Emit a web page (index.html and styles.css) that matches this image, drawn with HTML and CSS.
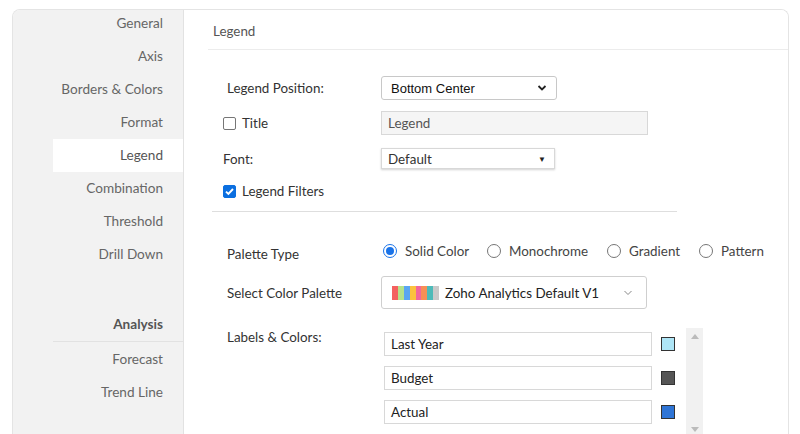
FILE: index.html
```html
<!DOCTYPE html>
<html>
<head>
<meta charset="utf-8">
<link rel="stylesheet" href="styles.css">
</head>
<body>
<div class="frame">
  <aside class="sidebar">
    <ul class="nav">
      <li class="nav-item">General</li>
      <li class="nav-item">Axis</li>
      <li class="nav-item">Borders &amp; Colors</li>
      <li class="nav-item">Format</li>
      <li class="nav-item active">Legend</li>
      <li class="nav-item">Combination</li>
      <li class="nav-item">Threshold</li>
      <li class="nav-item">Drill Down</li>
    </ul>
    <div class="nav-group">Analysis</div>
    <ul class="nav">
      <li class="nav-item">Forecast</li>
      <li class="nav-item">Trend Line</li>
    </ul>
  </aside>
  <main class="main">
    <div class="header"><span>Legend</span></div>
    <div class="form">
      <div class="row r1">
        <label class="label ind">Legend Position:</label>
        <div class="select native">
          <span>Bottom Center</span>
          <svg width="10" height="8" viewBox="0 0 10 8"><path d="M1.5 2 L5 5.5 L8.5 2" fill="none" stroke="#222" stroke-width="1.8"/></svg>
        </div>
      </div>
      <div class="row r2">
        <label class="label"><span class="cb"></span>Title</label>
        <div class="text-input">Legend</div>
      </div>
      <div class="row r3">
        <label class="label">Font:</label>
        <div class="select flat">
          <span>Default</span>
          <span class="tri">&#9660;</span>
        </div>
      </div>
      <div class="row r4">
        <label class="label"><span class="cb on"><svg width="11" height="11" viewBox="0 0 11 11"><path d="M2 5.6 L4.4 8 L9 3" fill="none" stroke="#fff" stroke-width="1.9"/></svg></span>Legend Filters</label>
      </div>
      <div class="sep"></div>
      <div class="row r5">
        <label class="label ind">Palette Type</label>
        <div class="radios">
          <span class="opt w1"><span class="radio on"></span><span class="rlabel">Solid Color</span></span>
          <span class="opt w2"><span class="radio"></span><span class="rlabel">Monochrome</span></span>
          <span class="opt w3"><span class="radio"></span><span class="rlabel">Gradient</span></span>
          <span class="opt"><span class="radio"></span><span class="rlabel">Pattern</span></span>
        </div>
      </div>
      <div class="row r6">
        <label class="label ind">Select Color Palette</label>
        <div class="palette">
          <span class="strip">
            <i style="background:#f4615f"></i><i style="background:#b6e28b"></i><i style="background:#5aa6f2"></i><i style="background:#fbc23e"></i><i style="background:#f2679c"></i><i style="background:#f78f56"></i><i style="background:#4dbab8"></i><i style="background:#c9c9c9"></i>
          </span>
          <span class="ptext">Zoho Analytics Default V1</span>
          <svg class="chev" width="10" height="6" viewBox="0 0 10 6"><path d="M1.5 1 L5 4.5 L8.5 1" fill="none" stroke="#888" stroke-width="1"/></svg>
        </div>
      </div>
      <div class="row r7">
        <label class="label ind top">Labels &amp; Colors:</label>
        <div class="lc">
          <div class="lc-list">
            <div class="lc-row"><div class="lc-input">Last Year</div><span class="sw" style="background:#aee5f6"></span></div>
            <div class="lc-row"><div class="lc-input">Budget</div><span class="sw" style="background:#555555"></span></div>
            <div class="lc-row"><div class="lc-input">Actual</div><span class="sw" style="background:#2f75d6"></span></div>
          </div>
          <div class="scroll">
            <svg width="8" height="5" viewBox="0 0 8 5"><path d="M0 5 L4 0 L8 5 Z" fill="#bbb"/></svg>
            <svg width="8" height="5" viewBox="0 0 8 5"><path d="M0 0 L4 5 L8 0 Z" fill="#bbb"/></svg>
          </div>
        </div>
      </div>
    </div>
  </main>
</div>
</body>
</html>
```
FILE: styles.css
```css
* { box-sizing: border-box; }
html, body { margin: 0; padding: 0; background: #fff; }
body {
  font-family: Lato, "Open Sans", sans-serif;
  font-size: 13.4px;
  color: #333;
  overflow: hidden;
}
.frame {
  margin: 9px 11px 0 12px;
  height: 425px;
  display: flex;
  border: 1px solid #e4e4e4;
  border-bottom: none;
  border-radius: 8px 8px 0 0;
  overflow: hidden;
}
.sidebar {
  width: 171px;
  flex: none;
  background: #f2f2f2;
  border-right: 1px solid #e2e2e2;
  padding-top: 0;
}
.nav { list-style: none; margin: 0; padding: 0; }
.nav:first-child { margin-top: -3px; }
.nav-item {
  height: 33px;
  line-height: 33px;
  margin-left: 40px;
  padding-right: 20px;
  text-align: right;
  color: #666;
  font-size: 13.6px;
}
.nav-item.active { background: #fff; color: #555; }
.nav-group {
  margin-top: 38px;
  margin-left: 40px;
  padding-right: 20px;
  height: 33px;
  line-height: 30px;
  text-align: right;
  font-weight: bold;
  color: #555;
  font-size: 13.6px;
  border-bottom: 1px solid #e2e2e2;
}
.nav-group + .nav .nav-item:first-child { margin-top: 1px; }

.main { flex: 1; background: #fff; }
.header {
  margin-left: 24px;
  height: 40px;
  border-bottom: 1px solid #ececec;
  padding-left: 5px;
  padding-top: 13px;
  color: #555;
}
.form { padding-left: 39px; }
.row { display: flex; align-items: center; }
.label {
  width: 158px;
  flex: none;
  display: flex;
  align-items: center;
  color: #333;
}
.label.ind { padding-left: 4px; }
.label.top { align-self: flex-start; }
.r1 { margin-top: 26px; height: 24px; }
.r2 { margin-top: 11px; height: 24px; }
.r3 { margin-top: 13px; height: 21px; }
.r4 { margin-top: 12px; height: 20px; }
.sep { margin-top: 10px; width: 465px; margin-left: -11px; border-top: 1px solid #dedede; }
.r5 { margin-top: 27px; height: 24px; }
.r5 .label { margin-top: 5px; }
.r6 { margin-top: 13px; height: 33px; }
.r7 { margin-top: 19px; align-items: flex-start; }
.r7 .label { margin-top: 1px; }

.cb {
  width: 13px; height: 13px;
  border: 1px solid #767676;
  border-radius: 2px;
  background: #fff;
  margin-right: 6px;
  display: inline-flex;
  align-items: center;
  justify-content: center;
}
.cb.on { background: #0b6fe0; border-color: #0b6fe0; }

.select {
  display: flex;
  align-items: center;
  justify-content: space-between;
  background: #fff;
}
.select.native {
  width: 176px; height: 24px;
  border: 1px solid #c8c8c8;
  border-radius: 3px;
  padding: 0 9px 0 9px;
  font-family: "Liberation Sans", Arial, sans-serif;
  font-size: 13px;
  color: #111;
}
.select.flat {
  width: 174px; height: 21px;
  border: 1px solid #d8d8d8;
  box-shadow: 0 1px 2px rgba(0,0,0,0.18);
  padding: 0 8px 0 6px;
  color: #333;
}
.tri { font-size: 8px; color: #222; }
.text-input {
  width: 267px; height: 24px;
  border: 1px solid #d8d8d8;
  background: #f5f5f5;
  padding-left: 6px;
  line-height: 22px;
  color: #555;
}
.radios { display: flex; align-items: center; margin-left: 2px; }
.opt { display: flex; align-items: center; flex: none; }
.opt.w1 { width: 104px; }
.opt.w2 { width: 120px; }
.opt.w3 { width: 92px; }
.radio {
  width: 14px; height: 14px;
  border: 1px solid #767676;
  border-radius: 50%;
  background: #fff;
  flex: none;
  position: relative;
}
.radio.on { border: 1px solid #1a73e8; }
.radio.on::after {
  content: "";
  position: absolute;
  left: 2px; top: 2px;
  width: 8px; height: 8px;
  border-radius: 50%;
  background: #1a73e8;
}
.rlabel { margin-left: 8px; color: #444; }

.palette {
  width: 266px; height: 33px;
  border: 1px solid #cfcfcf;
  border-radius: 3px;
  display: flex;
  align-items: center;
  padding-left: 10px;
}
.strip { display: flex; height: 14px; width: 47px; margin-right: 6px; }
.strip i { flex: 1; display: block; }
.ptext { color: #222; flex: 1; }
.chev { margin-right: 13px; }

.lc { display: flex; margin-left: 3px; }
.lc-list { padding-top: 4px; }
.lc-row { display: flex; align-items: center; height: 24px; margin-bottom: 10px; }
.lc-input {
  width: 268px; height: 24px;
  border: 1px solid #d8d8d8;
  padding-left: 6px;
  line-height: 22px;
  color: #222;
}
.sw {
  width: 14px; height: 14px;
  border: 1px solid #333;
  margin-left: 9px;
}
.scroll {
  width: 17px;
  height: 110px;
  margin-left: 11px;
  background: #f1f1f1;
  display: flex;
  flex-direction: column;
  align-items: center;
  justify-content: space-between;
  padding: 6px 0 6px;
}
```
